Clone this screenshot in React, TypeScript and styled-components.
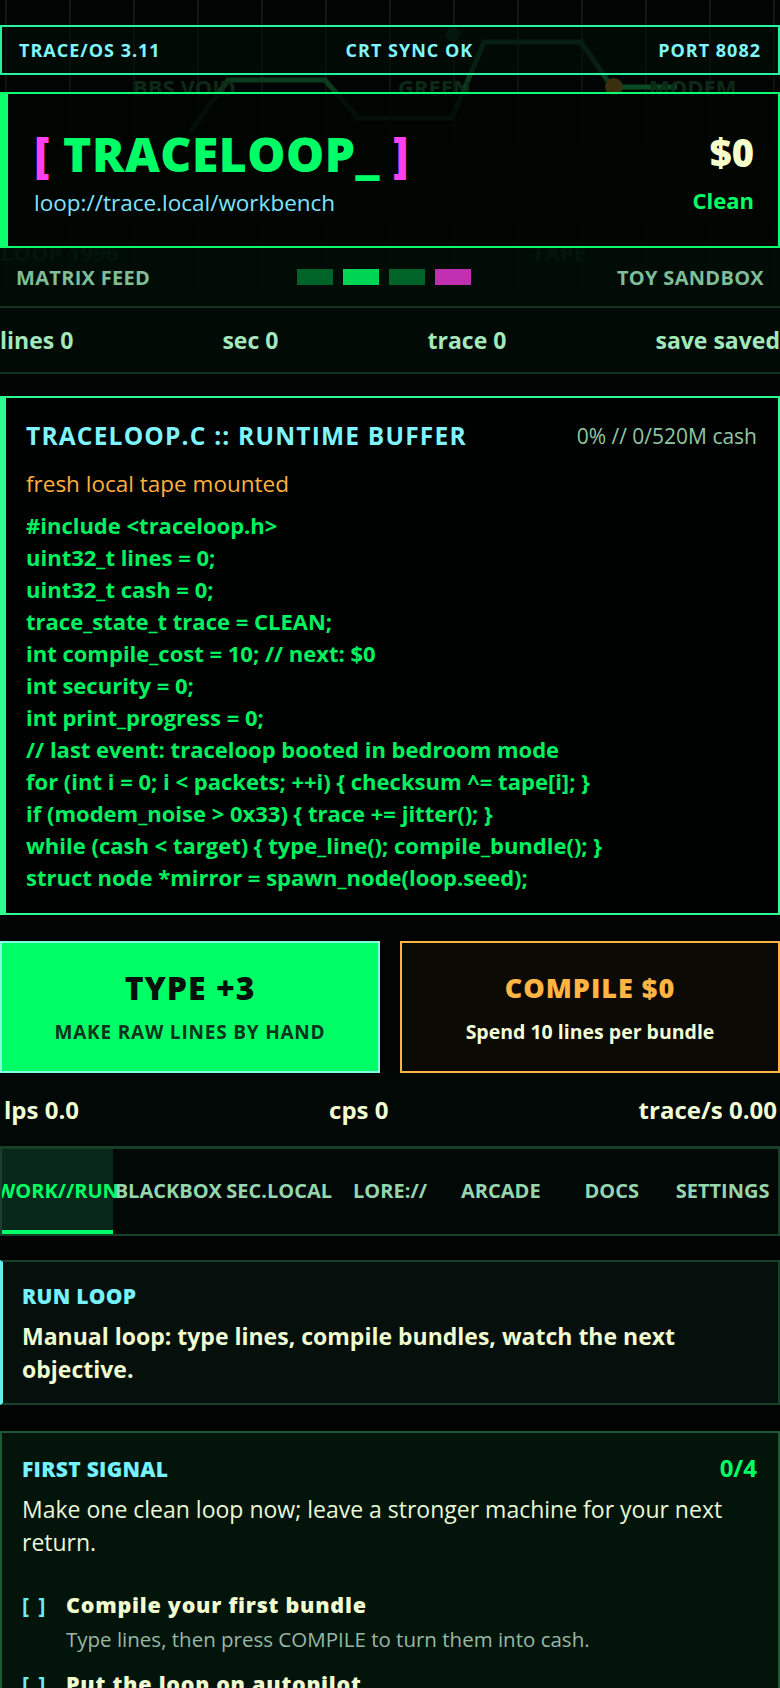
import { createGlobalStyle, styled } from "styled-components";

const GlobalStyle = createGlobalStyle`
  html, body {
    margin: 0;
    padding: 0;
    background: #010402;
  }
  body {
    font-family: "Open Sans", "Noto Sans", sans-serif;
    color: #f0fcd0;
  }
  * {
    box-sizing: border-box;
  }
`;

const Page = styled.div`
  position: relative;
  width: 780px;
  min-height: 1688px;
  overflow: hidden;
  padding-top: 25px;
`;

const Decor = styled.svg`
  position: absolute;
  top: 0;
  left: 0;
  z-index: 0;
  pointer-events: none;
`;

const Content = styled.div`
  position: relative;
  z-index: 1;
  display: flex;
  flex-direction: column;
`;

const StatusBar = styled.header`
  height: 50px;
  display: flex;
  align-items: center;
  justify-content: space-between;
  padding: 0 17px;
  border: 2px solid #26f3a0;
  background: rgba(3, 14, 8, 0.62);
  color: #7ff6ff;
  font-size: 18px;
  font-weight: 700;
  letter-spacing: 1px;
`;

const Hero = styled.section`
  margin-top: 17px;
  height: 156px;
  display: flex;
  justify-content: space-between;
  padding: 32px 24px 0 26px;
  border: 2px solid #0dff6e;
  border-left-width: 8px;
  background: rgba(1, 6, 3, 0.82);
`;

const Brand = styled.div`
  display: flex;
  flex-direction: column;
  gap: 6px;
`;

const Logo = styled.h1`
  margin: 0;
  font-size: 48px;
  line-height: 56px;
  font-weight: 800;
  letter-spacing: 0.5px;
  color: #00ff66;
`;

const Bracket = styled.span`
  color: #ff40f0;
`;

const Url = styled.div`
  font-size: 22.5px;
  line-height: 30px;
  color: #7fe4ff;
`;

const Wallet = styled.div`
  display: flex;
  flex-direction: column;
  align-items: flex-end;
  padding-top: 4px;
`;

const Cash = styled.div`
  font-size: 38px;
  line-height: 44px;
  font-weight: 800;
  color: #f4ffcc;
`;

const TraceState = styled.div`
  margin-top: 11px;
  font-size: 22px;
  line-height: 30px;
  font-weight: 700;
  color: #00ff66;
`;

const FeedRow = styled.div`
  height: 60px;
  display: flex;
  align-items: center;
  justify-content: space-between;
  padding: 0 16px;
  border-bottom: 2px solid #12331f;
  background: rgba(1, 16, 8, 0.78);
  color: #7fbe98;
  font-size: 20px;
  font-weight: 700;
  letter-spacing: 0.3px;
`;

const FeedBlocks = styled.div`
  display: flex;
  gap: 10px;
`;

const FeedBlock = styled.span<{ $color: string }>`
  width: 36px;
  height: 16px;
  background: ${(p) => p.$color};
`;

const StatRow = styled.div`
  height: 66px;
  display: flex;
  align-items: center;
  justify-content: space-between;
  border-bottom: 2px solid #12331f;
  background: #020a05;
  color: #a2e8bc;
  font-size: 23px;
  font-weight: 700;
  white-space: nowrap;
`;

const Buffer = styled.section`
  margin-top: 22px;
  padding: 23px 21px 20px 20px;
  border: 2px solid #2cff8f;
  border-left-width: 6px;
  background: rgba(0, 2, 1, 0.94);
`;

const BufferHead = styled.div`
  display: flex;
  align-items: center;
  justify-content: space-between;
`;

const BufferTitle = styled.h2`
  margin: 0;
  font-size: 24.5px;
  line-height: 30px;
  font-weight: 700;
  letter-spacing: 1.2px;
  color: #7ff4ff;
`;

const BufferMeta = styled.div`
  font-size: 21px;
  line-height: 30px;
  color: #8fc8a0;
`;

const BufferNote = styled.div`
  margin-top: 18px;
  margin-bottom: 10px;
  font-size: 22.5px;
  line-height: 30px;
  color: #ffb040;
`;

const CodeLine = styled.div`
  font-size: 22px;
  line-height: 32px;
  font-weight: 700;
  color: #00f060;
  white-space: pre;
`;

const ActionGrid = styled.div`
  margin-top: 26px;
  display: grid;
  grid-template-columns: 380px 380px;
  gap: 20px;
`;

const ActionButton = styled.button<{ $variant: "type" | "compile" }>`
  height: 132px;
  display: flex;
  flex-direction: column;
  align-items: center;
  justify-content: center;
  gap: 12px;
  padding: 0;
  font-family: inherit;
  cursor: pointer;
  border: 2px solid ${(p) => (p.$variant === "type" ? "#84ffe0" : "#ffb444")};
  background: ${(p) => (p.$variant === "type" ? "#00ff66" : "#0c0a05")};
`;

const ActionTitle = styled.span<{ $variant: "type" | "compile" }>`
  font-size: ${(p) => (p.$variant === "type" ? "32px" : "27px")};
  line-height: 38px;
  font-weight: 800;
  letter-spacing: 1px;
  color: ${(p) => (p.$variant === "type" ? "#03110a" : "#ffb444")};
`;

const ActionSub = styled.span<{ $variant: "type" | "compile" }>`
  font-size: ${(p) => (p.$variant === "type" ? "19px" : "19.5px")};
  line-height: 26px;
  font-weight: 700;
  letter-spacing: ${(p) => (p.$variant === "type" ? "0.8px" : "0")};
  color: ${(p) => (p.$variant === "type" ? "#07341c" : "#f4ffd8")};
`;

const RateRow = styled.div`
  height: 73px;
  display: flex;
  align-items: center;
  justify-content: space-between;
  padding: 0 3px 0 4px;
  background: #020805;
  color: #f2ffd4;
  font-size: 24px;
  font-weight: 700;
`;

const TabBar = styled.nav`
  height: 90px;
  display: grid;
  grid-template-columns: repeat(7, minmax(0, 1fr));
  border: 2px solid #17402a;
  border-top-width: 3px;
  background: #020805;
  overflow: hidden;
`;

const Tab = styled.div<{ $active?: boolean }>`
  display: flex;
  align-items: center;
  justify-content: center;
  white-space: nowrap;
  font-size: 20px;
  font-weight: 700;
  color: ${(p) => (p.$active ? "#00ff66" : "#96d6ae")};
  background: ${(p) => (p.$active ? "#07281a" : "transparent")};
  border-bottom: 4px solid ${(p) => (p.$active ? "#00ff66" : "transparent")};
  padding-top: 2px;
`;

const Panel = styled.section`
  margin-top: 24px;
  padding: 20px 20px 17px 19px;
  border: 2px solid #17402a;
  border-left: 3px solid #5ff0f0;
  background: #050f0c;
`;

const PanelTitle = styled.h3`
  margin: 0;
  font-size: 21px;
  line-height: 28px;
  font-weight: 800;
  letter-spacing: 0.3px;
  color: #76f2ff;
`;

const PanelText = styled.p`
  margin: 10px 0 0;
  font-size: 23px;
  line-height: 33px;
  font-weight: 700;
  color: #f0fcd0;
`;

const Objective = styled.section`
  margin-top: 26px;
  min-height: 300px;
  padding: 20px 21px 20px 20px;
  border: 2px solid #1d5a35;
  background: #03140b;
`;

const ObjectiveHead = styled.div`
  display: flex;
  align-items: flex-end;
  justify-content: space-between;
`;

const ObjectiveCount = styled.span`
  font-size: 24px;
  line-height: 30px;
  font-weight: 700;
  color: #00ff66;
`;

const ObjectiveText = styled.p`
  margin: 10px 0 0;
  font-size: 23px;
  line-height: 33px;
  color: #e8f8d6;
`;

const CheckList = styled.ul`
  list-style: none;
  margin: 32px 0 0;
  padding: 0;
  display: flex;
  flex-direction: column;
  gap: 18px;
`;

const CheckItem = styled.li`
  display: grid;
  grid-template-columns: 44px 1fr;
  row-gap: 7px;
`;

const CheckMark = styled.span`
  font-size: 21px;
  line-height: 28px;
  font-weight: 700;
  color: #6cecff;
  letter-spacing: 2px;
`;

const CheckTitle = styled.span`
  font-size: 21.5px;
  line-height: 28px;
  font-weight: 800;
  letter-spacing: 0.75px;
  color: #f0fcd0;
`;

const CheckHint = styled.span`
  grid-column: 2;
  font-size: 20.5px;
  line-height: 26px;
  color: #98b8a5;
`;

const gridX = Array.from({ length: 13 }, (_, i) => 6 + i * 64);

const code = [
  "#include <traceloop.h>",
  "uint32_t lines = 0;",
  "uint32_t cash = 0;",
  "trace_state_t trace = CLEAN;",
  "int compile_cost = 10; // next: $0",
  "int security = 0;",
  "int print_progress = 0;",
  "// last event: traceloop booted in bedroom mode",
  "for (int i = 0; i < packets; ++i) { checksum ^= tape[i]; }",
  "if (modem_noise > 0x33) { trace += jitter(); }",
  "while (cash < target) { type_line(); compile_bundle(); }",
  "struct node *mirror = spawn_node(loop.seed);",
];

const tabs = ["WORK//RUN", "BLACKBOX", "SEC.LOCAL", "LORE://", "ARCADE", "DOCS", "SETTINGS"];

const checks = [
  { title: "Compile your first bundle", hint: "Type lines, then press COMPILE to turn them into cash." },
  { title: "Put the loop on autopilot", hint: "Buy a helper script so lines keep coming while you wait." },
];

export default function App() {
  return (
    <>
      <GlobalStyle />
      <Page>
        <Decor width="780" height="300" viewBox="0 0 780 300">
          <defs>
            <linearGradient id="gridfade" x1="0" y1="0" x2="0" y2="1">
              <stop offset="0" stopColor="#0d1d13" stopOpacity="1" />
              <stop offset="1" stopColor="#0d1d13" stopOpacity="0" />
            </linearGradient>
          </defs>
          {gridX.map((x) => (
            <rect key={x} x={x - 1} y="0" width="2" height="300" fill="url(#gridfade)" />
          ))}
          <polyline
            points="190,132 228,80 325,80 358,118 452,118 484,42 581,42 612,87"
            fill="none"
            stroke="#0b3a1d"
            strokeWidth="5"
          />
          <circle cx="453" cy="34" r="7" fill="#0a2414" />
          <circle cx="614" cy="87" r="9" fill="#3a3010" />
          <line x1="622" y1="87" x2="677" y2="87" stroke="#0a4a22" strokeWidth="5" />
          <g fill="#0c2a17" fontFamily="Open Sans, sans-serif" fontWeight="700" fontSize="22">
            <text x="133" y="96">BBS VOID</text>
            <text x="398" y="96">GREEN</text>
            <text x="649" y="96">MODEM</text>
            <text x="1" y="261">LOOP 1996</text>
            <text x="532" y="261">TAPE</text>
          </g>
        </Decor>
        <Content>
          <StatusBar>
            <span>TRACE/OS 3.11</span>
            <span>CRT SYNC OK</span>
            <span>PORT 8082</span>
          </StatusBar>

          <Hero>
            <Brand>
              <Logo>
                <Bracket>[</Bracket> TRACELOOP_ <Bracket>]</Bracket>
              </Logo>
              <Url>loop://trace.local/workbench</Url>
            </Brand>
            <Wallet>
              <Cash>$0</Cash>
              <TraceState>Clean</TraceState>
            </Wallet>
          </Hero>

          <FeedRow>
            <span>MATRIX FEED</span>
            <FeedBlocks>
              <FeedBlock $color="#006428" />
              <FeedBlock $color="#00d455" />
              <FeedBlock $color="#006428" />
              <FeedBlock $color="#c030b0" />
            </FeedBlocks>
            <span>TOY SANDBOX</span>
          </FeedRow>

          <StatRow>
            <span>lines 0</span>
            <span>sec 0</span>
            <span>trace 0</span>
            <span>save saved</span>
          </StatRow>

          <Buffer>
            <BufferHead>
              <BufferTitle>TRACELOOP.C :: RUNTIME BUFFER</BufferTitle>
              <BufferMeta>0% // 0/520M cash</BufferMeta>
            </BufferHead>
            <BufferNote>fresh local tape mounted</BufferNote>
            {code.map((line) => (
              <CodeLine key={line}>{line}</CodeLine>
            ))}
          </Buffer>

          <ActionGrid>
            <ActionButton $variant="type">
              <ActionTitle $variant="type">TYPE +3</ActionTitle>
              <ActionSub $variant="type">MAKE RAW LINES BY HAND</ActionSub>
            </ActionButton>
            <ActionButton $variant="compile">
              <ActionTitle $variant="compile">COMPILE $0</ActionTitle>
              <ActionSub $variant="compile">Spend 10 lines per bundle</ActionSub>
            </ActionButton>
          </ActionGrid>

          <RateRow>
            <span>lps 0.0</span>
            <span>cps 0</span>
            <span>trace/s 0.00</span>
          </RateRow>

          <TabBar>
            {tabs.map((t, i) => (
              <Tab key={t} $active={i === 0}>
                {t}
              </Tab>
            ))}
          </TabBar>

          <Panel>
            <PanelTitle>RUN LOOP</PanelTitle>
            <PanelText>Manual loop: type lines, compile bundles, watch the next objective.</PanelText>
          </Panel>

          <Objective>
            <ObjectiveHead>
              <PanelTitle>FIRST SIGNAL</PanelTitle>
              <ObjectiveCount>0/4</ObjectiveCount>
            </ObjectiveHead>
            <ObjectiveText>
              Make one clean loop now; leave a stronger machine for your next return.
            </ObjectiveText>
            <CheckList>
              {checks.map((c) => (
                <CheckItem key={c.title}>
                  <CheckMark>[ ]</CheckMark>
                  <CheckTitle>{c.title}</CheckTitle>
                  <CheckHint>{c.hint}</CheckHint>
                </CheckItem>
              ))}
            </CheckList>
          </Objective>
        </Content>
      </Page>
    </>
  );
}
